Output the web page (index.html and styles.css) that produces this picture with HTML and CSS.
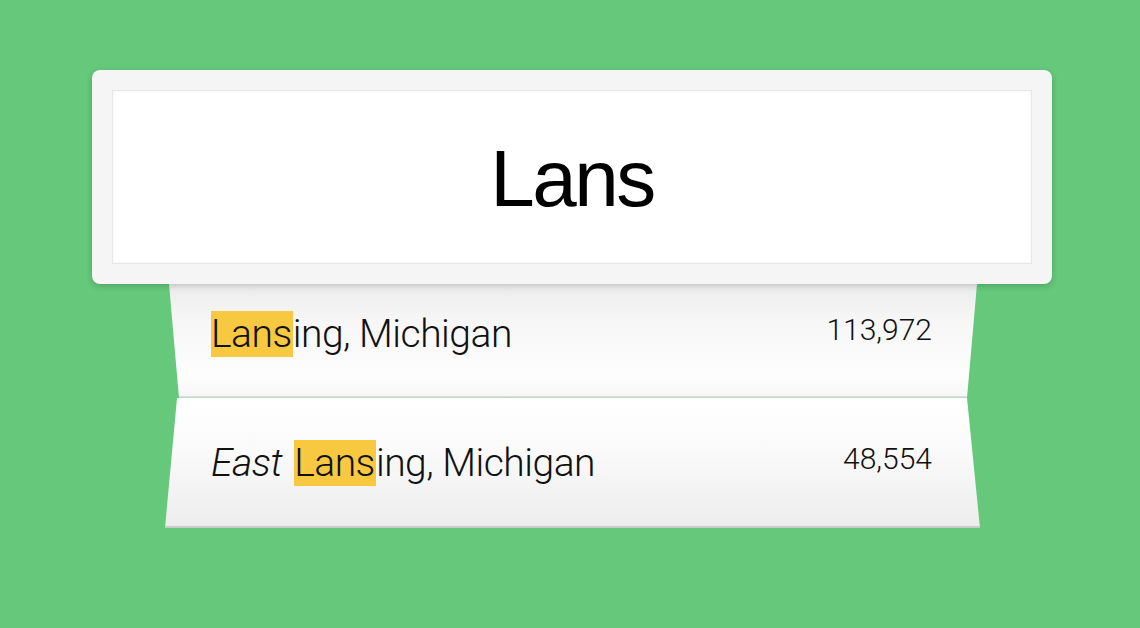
FILE: index.html
```html
<!DOCTYPE html>
<html>
<head>
<meta charset="utf-8">
<link rel="stylesheet" href="styles.css">
</head>
<body>
<div class="stage">
  <div class="search">
    <div class="input">Lans</div>
  </div>
  <div class="list">
    <div class="row row-first">
      <span class="name"><mark class="hl">Lans</mark>ing, Michigan</span>
      <span class="pop">113,972</span>
    </div>
    <div class="row row-second">
      <span class="name"><em class="pre">East</em> <mark class="hl">Lans</mark>ing, Michigan</span>
      <span class="pop">48,554</span>
    </div>
  </div>
</div>
</body>
</html>
```

FILE: styles.css
```css
html, body {
  margin: 0;
  padding: 0;
}
body {
  background: #65c87b;
  width: 1140px;
  height: 628px;
  overflow: hidden;
  font-family: "Liberation Sans", Arial, sans-serif;
}
.stage {
  display: flex;
  flex-direction: column;
  align-items: center;
  padding-top: 70px;
  padding-left: 4px;
}
.search {
  position: relative;
  z-index: 2;
  width: 960px;
  height: 214px;
  box-sizing: border-box;
  padding: 20px;
  background: #f5f5f5;
  border-radius: 8px;
  box-shadow: 0 2px 6px rgba(0, 0, 0, 0.18);
}
.input {
  height: 100%;
  box-sizing: border-box;
  background: #fff;
  border: 1px solid #e7e7e7;
  box-shadow: inset 0 0 3px rgba(0, 0, 0, 0.06);
  display: flex;
  align-items: center;
  justify-content: center;
  font-size: 80px;
  letter-spacing: -2.5px;
  color: #000;
  padding-top: 4px;
}
.list {
  width: 815px;
  display: flex;
  flex-direction: column;
  margin-left: 1px;
}
.row {
  display: flex;
  align-items: center;
  justify-content: space-between;
  box-sizing: border-box;
  padding: 0 48px 0 46px;
  font-family: Roboto, "Liberation Sans", sans-serif;
  font-weight: 300;
  color: #111;
}
.row-first {
  height: 114px;
  padding-bottom: 14px;
  background: linear-gradient(#ebebeb 0%, #f6f6f6 30%, #fdfdfd 80%, #f7f7f7 98%, #c6d6ca 99%);
  clip-path: polygon(4px 0, 812px 0, 802px 100%, 14px 100%);
}
.row-second {
  height: 130px;
  padding-bottom: 0;
  background: linear-gradient(#ffffff 0%, #fafafa 40%, #ededed 98%, #c9c9c9 99%);
  clip-path: polygon(12px 0, 802px 0, 815px 100%, 0 100%);
}
.name {
  font-size: 39px;
  letter-spacing: -0.5px;
}
.hl {
  background: #f8c840;
  color: inherit;
  padding: 0 1px 0 0;
}
.pre {
  font-style: italic;
  margin-right: 3px;
}
.pop {
  font-size: 30px;
  margin-bottom: 10px;
}
```
